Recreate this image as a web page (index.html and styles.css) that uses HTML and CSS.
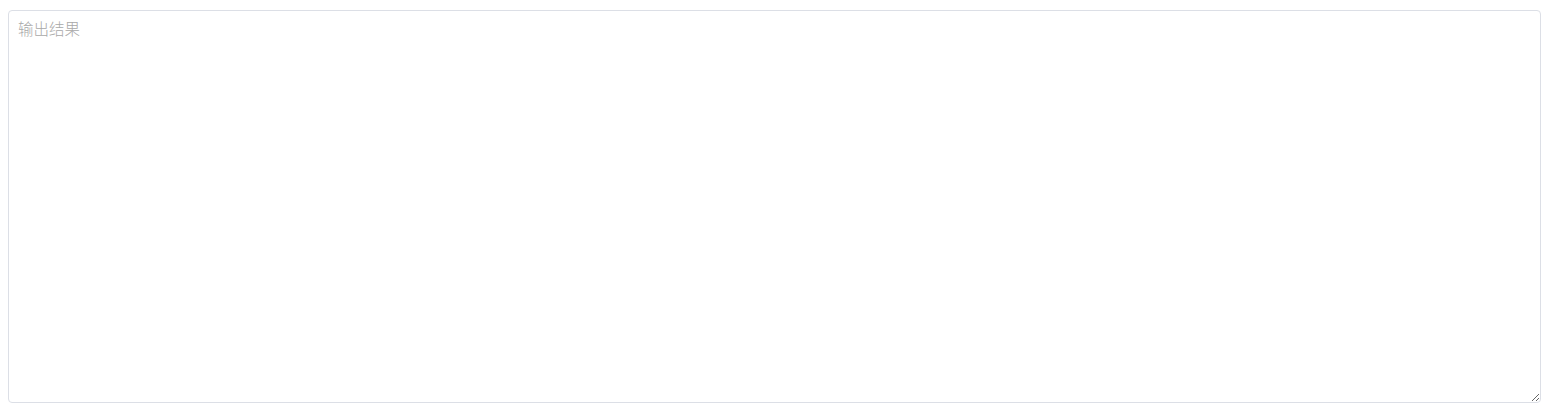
FILE: index.html
```html
<!DOCTYPE html>
<html>
<head>
<meta charset="utf-8">
<link rel="stylesheet" href="styles.css">
</head>
<body>
<textarea class="output" placeholder="输出结果"></textarea>
</body>
</html>
```
FILE: styles.css
```css
html, body { margin: 0; padding: 0; background: #fff; }
body { padding: 10px 8px 0 8px; }
.output {
  display: block;
  box-sizing: border-box;
  width: 100%;
  height: 393px;
  margin: 0;
  padding: 7px 9px;
  border: 1px solid #dcdfe6;
  border-radius: 4px;
  font-family: "Noto Sans CJK SC", sans-serif;
  font-size: 15.5px;
  font-weight: 300;
  line-height: 1.3;
  color: #333;
  outline: none;
}
.output::placeholder { color: #a8a8a8; }
```
